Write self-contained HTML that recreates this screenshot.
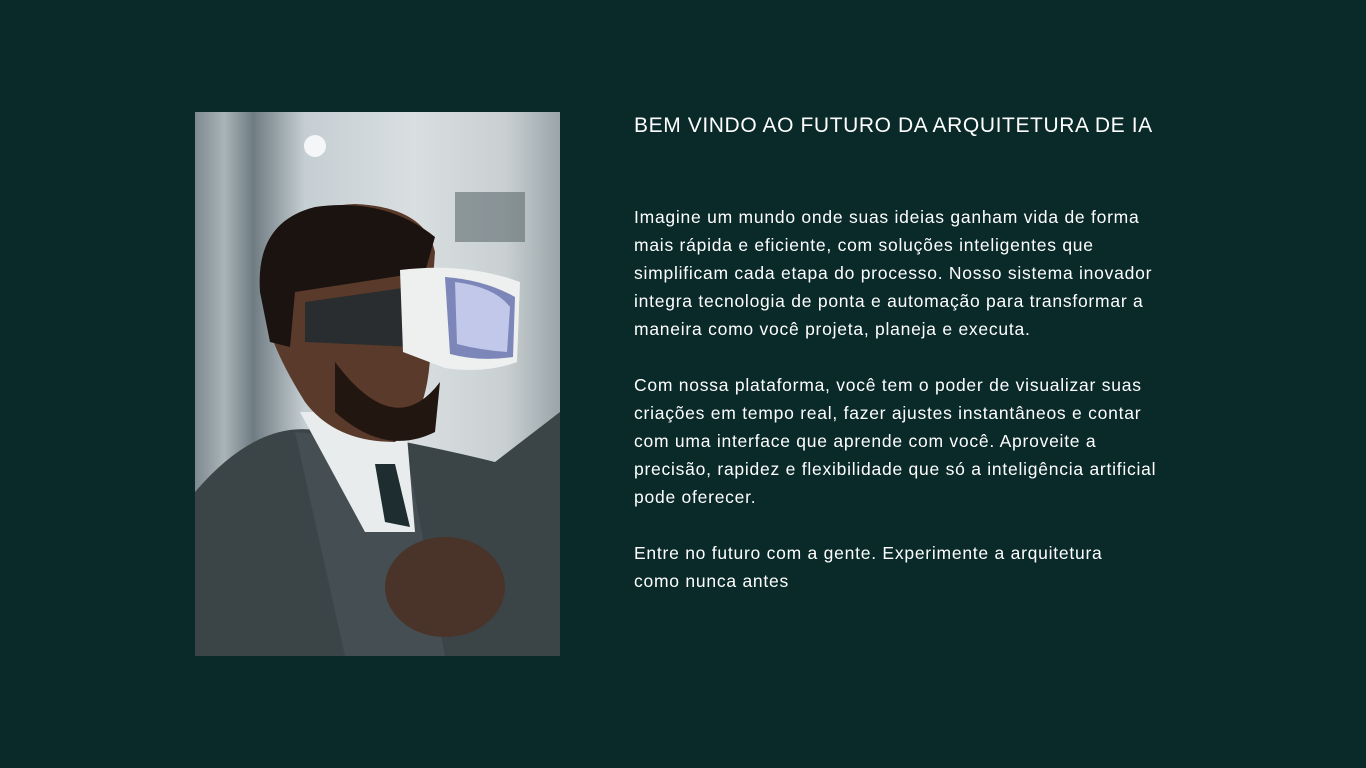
<!DOCTYPE html>
<html><head><meta charset="utf-8"><style>
body{margin:0;width:1366px;height:768px;background:#0a2929;overflow:hidden;font-family:"Liberation Sans",sans-serif;color:#fff;position:relative}
.img{position:absolute;left:195px;top:112px;width:365px;height:544px;overflow:hidden;background:linear-gradient(90deg,#7d8a90 0%,#a9b4b8 8%,#6f7c82 16%,#c5ced2 30%,#d9dfe1 60%,#c9d0d2 85%,#9aa5a8 100%)}
.t{position:absolute;left:634px;white-space:pre;font-size:17.5px;line-height:28px;letter-spacing:0.75px}
h1{position:absolute;left:634px;top:114px;margin:0;font-weight:normal;font-size:21px;letter-spacing:0.6px}
</style></head><body>
<div class="img">
<svg width="365" height="544" viewBox="0 0 365 544">
<circle cx="120" cy="34" r="11" fill="#f4f6f7"/>
<rect x="260" y="80" width="70" height="50" fill="#5d6b6e" opacity=".6"/>
<path d="M0 380 Q60 310 120 318 L210 330 Q260 340 300 350 L365 300 L365 544 L0 544Z" fill="#3b4447"/>
<path d="M100 320 L210 330 L250 544 L150 544Z" fill="#454e52"/>
<path d="M105 300 L210 300 L220 420 L170 420Z" fill="#e9ecec"/>
<path d="M180 352 L200 352 L215 415 L190 410Z" fill="#1e2d30"/>
<ellipse cx="250" cy="475" rx="60" ry="50" fill="#4a3328"/>
<path d="M70 170 Q75 95 160 92 Q230 95 240 140 L235 210 Q240 300 200 330 Q140 330 110 290 Q85 250 75 220Z" fill="#5a3a2a"/>
<path d="M140 250 Q200 330 245 270 L240 320 Q190 345 140 300Z" fill="#221611"/>
<path d="M65 180 Q60 110 120 95 Q190 85 240 125 L230 160 L100 180 L95 235 L75 230Z" fill="#1b1310"/>
<path d="M110 190 L215 175 L220 235 L110 230Z" fill="#2a2d2f"/>
<path d="M205 158 Q270 150 325 170 L322 250 Q290 262 250 256 L208 240Z" fill="#eef0f0"/>
<path d="M250 165 Q290 168 320 185 L318 245 Q285 250 255 242Z" fill="#7d86b8"/>
<path d="M260 170 Q300 175 315 195 L312 240 Q285 238 262 232Z" fill="#c2c8ea"/>
</svg>
</div>
<h1>BEM VINDO AO FUTURO DA ARQUITETURA DE IA</h1>
<div class="t" style="top:203px">Imagine um mundo onde suas ideias ganham vida de forma
mais rápida e eficiente, com soluções inteligentes que
simplificam cada etapa do processo. Nosso sistema inovador
integra tecnologia de ponta e automação para transformar a
maneira como você projeta, planeja e executa.

Com nossa plataforma, você tem o poder de visualizar suas
criações em tempo real, fazer ajustes instantâneos e contar
com uma interface que aprende com você. Aproveite a
precisão, rapidez e flexibilidade que só a inteligência artificial
pode oferecer.

Entre no futuro com a gente. Experimente a arquitetura
como nunca antes</div>
</body></html>
